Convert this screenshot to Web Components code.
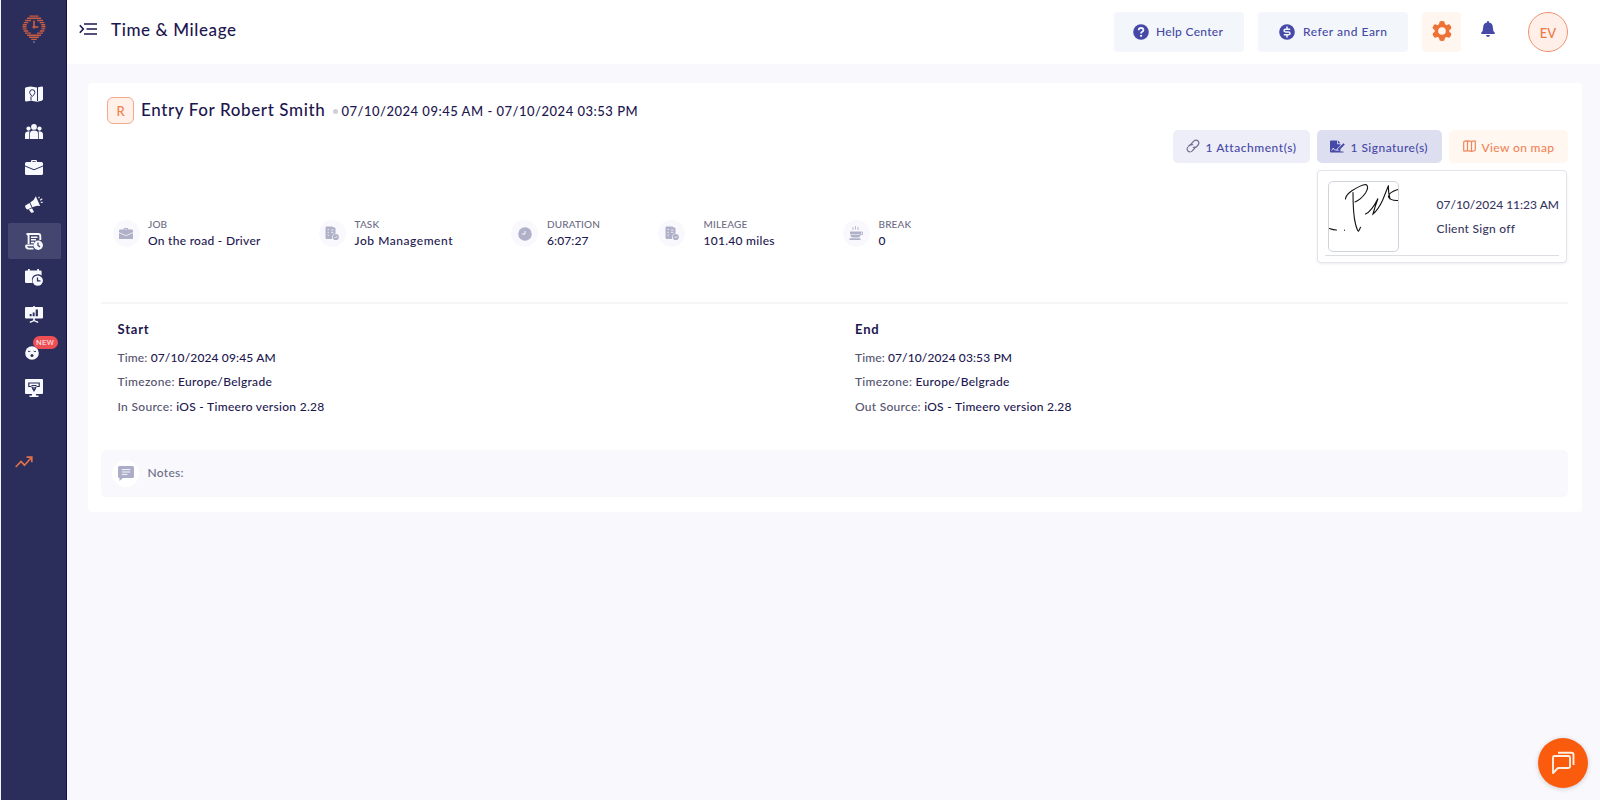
<!DOCTYPE html>
<html lang="en">
<head>
<meta charset="utf-8">
<title>Time &amp; Mileage</title>
<style>
    html, body {
        margin: 0;
        height: 100%;
        overflow: hidden;
    }

    body {
        font-family: Lato, "Open Sans", sans-serif;
        font-weight: 500;
        font-size: 12px;
        line-height: 16px;
        letter-spacing: 0.3px;
        color: #1d1750;
        background: #f8f8fd;
        --indigo: #4649a6;
        --orange: #ee7136;
        --muted: #6c6c84;
    }
</style>
</head>
<body>
<app-shell>
    <side-bar slot="side"></side-bar>
    <top-bar slot="top" heading="Time &amp; Mileage"></top-bar>
    <entry-card initial="R" heading="Entry For Robert Smith" range="07/10/2024 09:45 AM - 07/10/2024 03:53 PM">
        <action-chip slot="actions" icon="link" kind="plain" style="width:137px;--ls:.53px">1 Attachment(s)</action-chip>
        <action-chip slot="actions" icon="sign" kind="active" style="width:125px;--ls:.46px">1 Signature(s)</action-chip>
        <action-chip slot="actions" icon="map" kind="warm" style="width:119px;--ls:.36px">View on map</action-chip>
        <signature-popup slot="popup" date="07/10/2024 11:23 AM" note="Client Sign off"></signature-popup>

        <stat-item slot="stats" icon="case" label="JOB" style="width:206px;--gap:8.5px">On the road - Driver</stat-item>
        <stat-item slot="stats" icon="task" label="TASK" style="width:192.5px;--ls:.54px">Job Management</stat-item>
        <stat-item slot="stats" icon="clock" label="DURATION" style="width:147px;--ls:.1px">6:07:27</stat-item>
        <stat-item slot="stats" icon="task" label="MILEAGE" style="width:184.5px;--gap:18.5px">101.40 miles</stat-item>
        <stat-item slot="stats" icon="cup" label="BREAK">0</stat-item>

        <time-block slot="blocks" heading="Start">
            <info-row label="Time:" style="--ls:.14px">07/10/2024 09:45 AM</info-row>
            <info-row label="Timezone:">Europe/Belgrade</info-row>
            <info-row label="In Source:">iOS - Timeero version 2.28</info-row>
        </time-block>
        <time-block slot="blocks" heading="End">
            <info-row label="Time:" style="--ls:.11px">07/10/2024 03:53 PM</info-row>
            <info-row label="Timezone:">Europe/Belgrade</info-row>
            <info-row label="Out Source:" style="--ls:.27px">iOS - Timeero version 2.28</info-row>
        </time-block>

        <notes-bar slot="notes">Notes:</notes-bar>
    </entry-card>
    <chat-button slot="chat"></chat-button>
</app-shell>

<script>
    // [viewBox, markup]; shapes use currentColor, cut-outs use --cut
    const ICONS = {
        logo: ['0 0 24 28', `
            <g stroke="currentColor" stroke-width="1.4" fill="none">
                <path d="M7.5 1.1h9M5 3.3h14M3 5.5h6M15 5.5h6M1.7 7.6h4.6M17.7 7.6h4.6M.8 9.7h4M19.2 9.7h4M.5 11.8h4M19.5 11.8h4M.8 13.9h4M19.2 13.9h4M1.7 16h4.6M17.7 16h4.6M3 18.1h6M15 18.1h6M5 20.2h14M7 22.3h10M9.2 24.4h5.6"/>
                <path d="M12 5.5v6.500h4.500" stroke-width="1.7"/>
            </g>
            <circle cx="12" cy="12" r="1.6" fill="currentColor"/><circle cx="12" cy="27" r=".7" fill="#b9b4d6"/>`],
        pinmap: ['0 0 18 16', `
            <path fill="currentColor" d="M1.2 1.2 5.500.5 12 1.6 16.8.5q1.2 0 1.2 1v12l-1.2 1.200-4.600 1-6-1-5 .8Q0 15.500 0 14.300V2.400q0-1 1.200-1.200z"/>
            <path fill="none" stroke="var(--cut)" d="M12.500 1v14M4.700 6.300a2.600 2.600 0 1 1 5.200 0c0 1.800-2.600 4.200-2.600 4.200S4.700 8.100 4.700 6.300zM6 10.500v4"/>`],
        people: ['0 0 18 15', `
            <g fill="currentColor"><circle cx="9" cy="2.9" r="2.9"/><circle cx="3.5" cy="4.6" r="2.1"/><circle cx="14.5" cy="4.6" r="2.1"/>
            <path d="M4.9 15v-5.200q0-3.400 4.100-3.400t4.100 3.400V15zM0 15v-4.500q0-3.200 4.600-3.200Q4.200 8.500 4.200 10v5zM18 15v-4.500q0-3.200-4.600-3.200.4 1.200.4 2.700v5z"/></g>`],
        case: ['0 0 18 15', `
            <path fill="currentColor" d="M6 2V1.200Q6 0 7.200 0h3.600Q12 0 12 1.200V2h4.500Q18 2 18 3.500v1.900L9 9.200 0 5.400V3.500Q0 2 1.500 2zM7.300 2h3.400v-.8H7.300zM0 6.500l9 3.700 9-3.700v7q0 1.500-1.500 1.500h-15Q0 15 0 13.500z"/>`],
        horn: ['0 0 18 17', `
            <path fill="currentColor" d="M.3 9.4 4.500 7l2.200 4.600-4 1.800Q1.500 13.600.7 12T.3 9.400zM5.200 6.600Q9.600 4 10.800.3L15.200 10Q11.600 9 7.500 11.300zM3.800 13.600l3.200-1.400 2 3.800q-1 1-2.800.8z"/>
            <path stroke="currentColor" stroke-width="1.100" d="M13.700 2.200l.6-1.400M15 4.200l2.300-1.400M15.800 6.400h1.800"/>`],
        sheet: ['0 0 18 17', `
            <path fill="none" stroke="currentColor" stroke-width="1.900" d="M3.600 11V3.200Q3.400 1 1.500 1h11.800q2 0 2 2.200V7M.800 12.400h7.600M1 12.200q0 3.400 2.500 3.400h5"/>
            <path stroke="currentColor" stroke-width="1.500" d="M6 4.200h6.500M6 6.800h5M6 9.400h3"/>
            <circle cx="13.200" cy="12.200" r="4.700" fill="currentColor"/>
            <path fill="none" stroke="var(--cut)" stroke-width="1.300" d="M13 9.600v2.900l2 1.400"/>`],
        calendar: ['0 0 18 17', `
            <path fill="currentColor" d="M3 0h1.800v1.400h7.400V0H14v1.400h1.400q1.200 0 1.200 1.200v4Q14 4.600 10.300 5.700 6.200 7.300 7 12.200q.2 1 .8 1.800H1.200Q0 14 0 12.800V2.600q0-1.200 1.200-1.200H3z"/>
            <circle cx="12.700" cy="11.600" r="5.200" fill="currentColor"/>
            <path fill="none" stroke="var(--cut)" stroke-width="1.300" d="M12.500 8.600v3.300h3"/>`],
        board: ['0 0 18 17', `
            <path fill="currentColor" d="M8.200 0h1.600v1H17q1 0 1 1v9.500q0 1-1 1H9.800v1.700l3.700 1.600-.6 1.200L9 15.300 5.100 17l-.6-1.200 3.700-1.600v-1.700H1q-1 0-1-1V2q0-1 1-1h7.200z"/>
            <path fill="var(--cut)" d="M4.700 8h1.900v2.300H4.700zM7.700 6.500h1.900v3.800H7.700zM10.700 3.500h2.200v6.800h-2.200z"/>`],
        face: ['0 0 14 14', `
            <circle cx="7" cy="7" r="6.800" fill="currentColor"/><circle cx="7" cy="9.500" r="1.500" fill="var(--cut)"/>
            <path fill="none" stroke="var(--cut)" d="M3 5.200q1.200.9 2.400 0M8.600 5.200q1.200.9 2.400 0"/>`],
        monitor: ['0 0 18 18', `
            <path fill="currentColor" d="M1 0h16q1 0 1 1v13q0 1-1 1h-6v1.500h2.500V18h-9v-1.500H7V15H1q-1 0-1-1V1q0-1 1-1z"/>
            <path fill="none" stroke="var(--cut)" stroke-width="1.200" d="M6.200 7.500H3.800V4h10.400v3.500h-2.400M6.500 6.500h5M6.700 7.500 9 11.800l2.300-4.300"/><circle cx="9" cy="9.800" r="1.200" fill="none" stroke="var(--cut)"/>`],
        trend: ['0 0 18 12', `
            <path fill="none" stroke="currentColor" stroke-width="1.700" d="M.7 11 6 5.500l3.500 3.700L16 2M11.500 1.200h5.300v5"/>`],
        menu: ['0 0 18 12', `
            <path fill="none" stroke="currentColor" stroke-width="1.600" d="M.8 2.300 4.300 6 .8 9.700M5 1h13M7.500 6H18M5 11h13"/>`],
        help: ['0 0 16 16', `
            <circle cx="8" cy="8" r="7.800" fill="currentColor"/>
            <path fill="none" stroke="var(--cut)" stroke-width="1.800" d="M5.700 6.200q.1-2.200 2.400-2.200t2.300 2q0 1.100-1.200 1.700T8.100 9.500"/><circle cx="8.100" cy="11.800" r="1.100" fill="var(--cut)"/>`],
        dollar: ['0 0 16 16', `
            <circle cx="8" cy="8" r="7.800" fill="currentColor"/>
            <path fill="none" stroke="var(--cut)" stroke-width="1.500" d="M11.200 5.200H6.700Q5 5.200 5 6.600T6.700 8h2.700Q11 8 11 9.400t-1.600 1.400H4.800M8 2.500v2.700M8 10.800v2.700"/>`],
        gear: ['0 0 20 20', `
            <g fill="currentColor">
                <circle cx="10" cy="10" r="7.400"/>
                <rect x="7.200" width="5.600" height="20" rx="2.200"/>
                <rect x="7.200" width="5.600" height="20" rx="2.200" transform="rotate(60 10 10)"/>
                <rect x="7.200" width="5.600" height="20" rx="2.200" transform="rotate(120 10 10)"/>
            </g>
            <circle cx="10" cy="10" r="3.800" fill="var(--cut)"/>`],
        bell: ['0 0 14 16', `
            <path fill="currentColor" d="M6 1q0-1 1-1t1 1v.5q3.800.7 3.800 4.700 0 3.800 1.900 5.400.6 1.400-.7 1.400H1Q-.3 13 .3 11.600q1.900-1.600 1.900-5.400 0-4 3.800-4.700zM5 14h4q-.3 2-2 2t-2-2z"/>`],
        link: ['0 0 14 14', `
            <g fill="none" stroke="currentColor" stroke-width="1.200" stroke-linecap="round">
                <path d="M5 6.200Q5 4.900 6 4l2-2.100q2-1.600 4 .1 1.700 2 .1 4L10.500 7.700Q9 9 7.300 8.300"/>
                <path d="M9 7.800Q9 9.100 8 10l-2 2.100q-2 1.600-4-.1-1.700-2-.1-4l1.600-1.700Q5 5 6.700 5.700" stroke-dasharray="6 1.500"/>
            </g>`],
        sign: ['0 0 15 13', `
            <path fill="currentColor" d="M1 .5h6.200v3.700h3.300v1L6.700 9v2h2l1.800-1.800v2.300q0 1-1 1H1q-1 0-1-1v-10q0-1 1-1zM8 .5l2.500 2.800H8zM13.400 3.200l1.400 1.300-5.500 5.700-1.900.5.500-1.900z"/>
            <path fill="none" stroke="var(--cut)" stroke-width=".9" d="M1.700 10.500 3.200 8l1.300 2H7"/>
            <path stroke="currentColor" d="M10 12h3.500"/>`],
        map: ['0 0 13 12', `
            <path fill="none" stroke="currentColor" stroke-width="1.200" d="M1.600 1.200 4.500.8l4 .5 3-.5q.8 0 .8.800v8.500l-.8.700-3 .5-4-.7-3 .6q-.8 0-.8-.8V2zM4.500.8v10M8.500 1.300v10"/>`],
        task: ['0 0 14 15', `
            <path fill="currentColor" d="M1.700.5H7l3.500 1.500v5.600q-3.500.5-3.500 4.300 0 .6.200 1.100H1.700q-1.200 0-1.200-1.200V1.700q0-1.200 1.200-1.200z"/>
            <path stroke="var(--cut)" stroke-width=".8" d="M2.500 3.500h1.500M2.500 6.300h1.500M2.500 9.100h1.500M6 4h2.500M6 6.300h2.500"/>
            <circle cx="10.800" cy="11" r="3.100" fill="currentColor"/><path fill="none" stroke="var(--cut)" stroke-width=".8" d="m9.500 11 1 1 1.800-2"/>`],
        clock: ['0 0 14 14', `
            <circle cx="7" cy="7" r="6.800" fill="currentColor"/><path fill="none" stroke="var(--cut)" d="M7 4v3H3.800"/>`],
        cup: ['0 0 14 15', `
            <path fill="currentColor" d="M1 5.500h11V7q-.3 4-2.500 4.500h-6Q1.200 11 1 7zM.5 12.300h11V14H.5z"/>
            <path fill="none" stroke="currentColor" stroke-width=".9" d="M12 6h1.500v2.500H11M4 1v3M6.500 0v3.500M9 1v3"/>
            <path stroke="var(--cut)" stroke-width=".6" d="M1 8.500h10"/>`],
        note: ['0 0 16 15', `
            <path fill="currentColor" d="M1.500 0h13Q16 0 16 1.500v9q0 1.500-1.500 1.500H5l-3.500 3V12Q0 12 0 10.500v-9Q0 0 1.500 0z"/>
            <path stroke="var(--cut)" stroke-width=".9" d="M3.800 3.600h8.400M3.800 6h8.400M3.800 8.400h5.500"/>`],
        chat: ['0 0 24 24', `
            <g fill="none" stroke="currentColor" stroke-width="1.900" stroke-linejoin="round">
                <path d="M2 6.500Q2 5 3.500 5h14Q19 5 19 6.500v9q0 1.500-1.500 1.500H7l-5 5zM7 1.800h13.500q2 0 2 2V14"/>
            </g>`],
    };

    class UiIcon extends HTMLElement {
        connectedCallback() {
            const [box, body] = ICONS[this.getAttribute('name')];
            const [, , w, h] = box.split(' ');
            const size = this.getAttribute('w') || w;
            this.attachShadow({mode: 'open'});
            this.shadowRoot.innerHTML = `
                <style>
                    :host { display: inline-flex; flex: none; }
                    svg { display: block; }
                </style>
                <svg viewBox="${box}" width="${size}" height="${size * h / w}">${body}</svg>
            `;
        }
    }

    class AppShell extends HTMLElement {
        connectedCallback() {
            this.attachShadow({mode: 'open'});
            this.shadowRoot.innerHTML = `
                <style>
                    :host { display: flex; height: 800px; }
                    .main { flex: 1; min-width: 0; display: flex; flex-direction: column; }
                    .content { padding: 19px 18.5px 0 21px; }
                    .chat { position: fixed; right: 12px; bottom: 12.5px; }
                </style>
                <slot name="side"></slot>
                <div class="main">
                    <slot name="top"></slot>
                    <div class="content"><slot></slot></div>
                </div>
                <div class="chat"><slot name="chat"></slot></div>
            `;
        }
    }

    class SideBar extends HTMLElement {
        connectedCallback() {
            const names = ['pinmap', 'people', 'case', 'horn', 'sheet', 'calendar', 'board', 'face', 'monitor'];
            this.attachShadow({mode: 'open'});
            this.shadowRoot.innerHTML = `
                <style>
                    :host {
                        --cut: #2b2d5b;
                        box-sizing: border-box;
                        width: 67px;
                        flex: none;
                        display: flex;
                        flex-direction: column;
                        background: #2b2d5b;
                        border-left: 1px solid #f3f3fa;
                        border-right: 1px solid #11104f;
                        color: #f8f9ff;
                    }
                    .logo { height: 61px; padding: 15px 0 0 21px; box-sizing: border-box; color: #c75d43; }
                    nav { display: flex; flex-direction: column; padding: 15px 5px 0 6.5px; }
                    .item {
                        height: 36.7px;
                        display: flex;
                        align-items: center;
                        justify-content: center;
                        position: relative;
                    }
                    .active { background: #44466f; --cut: #44466f; border-radius: 2px; }
                    .item.face { box-sizing: border-box; justify-content: flex-start; padding: 4px 0 0 17px; }
                    .new {
                        position: absolute;
                        left: 25px;
                        top: 3px;
                        width: 25px;
                        height: 13px;
                        border-radius: 7px;
                        background: #ee4f55;
                        color: #ffe9e9;
                        font: 400 8px/13px Roboto, sans-serif;
                        letter-spacing: 0.2px;
                        text-align: center;
                    }
                    .trend { padding: 50px 0 0 14px; color: #e0714a; }
                </style>
                <div class="logo"><ui-icon name="logo"></ui-icon></div>
                <nav>
                    ${names.map(n => `
                        <div class="item ${n} ${n === 'sheet' ? 'active' : ''}">
                            <ui-icon name="${n}"></ui-icon>${n === 'face' ? '<span class="new">NEW</span>' : ''}
                        </div>`).join('')}
                </nav>
                <div class="trend"><ui-icon name="trend"></ui-icon></div>
            `;
        }
    }

    class TopBar extends HTMLElement {
        connectedCallback() {
            this.attachShadow({mode: 'open'});
            this.shadowRoot.innerHTML = `
                <style>
                    :host {
                        box-sizing: border-box;
                        height: 64px;
                        display: flex;
                        align-items: flex-start;
                        padding: 12px 32px 0 12px;
                        background: #fff;
                    }
                    .menu { padding-top: 10.5px; }
                    h1 { margin: 8px auto 0 14px; font-size: 17px; line-height: 20px; font-weight: 500; letter-spacing: 0.61px; }
                    .btn {
                        box-sizing: border-box;
                        height: 39.5px;
                        display: flex;
                        align-items: center;
                        border-radius: 4px;
                        background: #f3f7fb;
                        --cut: #f3f7fb;
                        color: var(--indigo);
                    }
                    .help { width: 130px; padding-left: 19.5px; gap: 7px; }
                    .refer { width: 150px; padding-left: 21.5px; gap: 8px; margin-left: 14px; letter-spacing: 0.5px; }
                    .gear { width: 39px; justify-content: center; margin-left: 14.5px; background: #fff7ef; --cut: #fff7ef; color: var(--orange); }
                    .gear ui-icon { margin-top: -1px; }
                    .bell { margin: 9px 0 0 20px; color: var(--indigo); }
                    .avatar {
                        box-sizing: border-box;
                        width: 40px;
                        height: 40px;
                        margin-left: 33px;
                        border: 1px solid #f0946f;
                        border-radius: 50%;
                        background: #ffefe8;
                        color: #ec7a46;
                        font: 500 13px/40px Lato, sans-serif;
                        letter-spacing: 0;
                        text-align: center;
                    }
                </style>
                <div class="menu"><ui-icon name="menu"></ui-icon></div>
                <h1></h1>
                <div class="btn help"><ui-icon name="help"></ui-icon><span>Help Center</span></div>
                <div class="btn refer"><ui-icon name="dollar"></ui-icon><span>Refer and Earn</span></div>
                <div class="btn gear"><ui-icon name="gear"></ui-icon></div>
                <div class="bell"><ui-icon name="bell"></ui-icon></div>
                <div class="avatar">EV</div>
            `;
            this.shadowRoot.querySelector('h1').textContent = this.getAttribute('heading');
        }
    }

    class EntryCard extends HTMLElement {
        connectedCallback() {
            this.attachShadow({mode: 'open'});
            this.shadowRoot.innerHTML = `
                <style>
                    :host {
                        display: block;
                        box-sizing: border-box;
                        height: 429px;
                        padding: 14px 14px 0 13px;
                        background: #fff;
                        border-radius: 4px;
                    }
                    .title { display: flex; padding-left: 6px; height: 33px; }
                    .initial {
                        box-sizing: border-box;
                        width: 27px;
                        height: 27px;
                        border: 1px solid #f3a98b;
                        border-radius: 6px;
                        background: #fff0ea;
                        color: #ee8048;
                        font-size: 13px;
                        line-height: 27px;
                        letter-spacing: 0;
                        text-align: center;
                    }
                    h2 { margin: 3px 0 0 7px; font-size: 17px; line-height: 20px; font-weight: 500; letter-spacing: 0.62px; }
                    .dot { width: 5px; height: 5px; border-radius: 50%; background: #cfcfd8; margin: 11.5px 3.5px 0 7.5px; }
                    .range { margin-top: 5px; font-size: 13px; line-height: 19px; letter-spacing: 0.5px; }
                    .actions { display: flex; justify-content: flex-end; gap: 7px; position: relative; }
                    .popup { position: absolute; right: 0.5px; top: 40px; }
                    .stats { display: flex; padding: 56px 0 0 11.5px; height: 83px; }
                    .blocks { display: grid; grid-template-columns: 737.5px 1fr; padding-left: 16.5px; height: 146px; border-top: 2px solid #f6f6f9; }
                </style>
                <div class="title">
                    <div class="initial"></div>
                    <h2></h2>
                    <div class="dot"></div>
                    <div class="range"></div>
                </div>
                <div class="actions">
                    <slot name="actions"></slot>
                    <div class="popup"><slot name="popup"></slot></div>
                </div>
                <div class="stats"><slot name="stats"></slot></div>
                <div class="blocks"><slot name="blocks"></slot></div>
                <slot name="notes"></slot>
            `;
            this.shadowRoot.querySelector('.initial').textContent = this.getAttribute('initial');
            this.shadowRoot.querySelector('h2').textContent = this.getAttribute('heading');
            this.shadowRoot.querySelector('.range').textContent = this.getAttribute('range');
        }
    }

    class ActionChip extends HTMLElement {
        connectedCallback() {
            this.attachShadow({mode: 'open'});
            this.shadowRoot.innerHTML = `
                <style>
                    :host {
                        box-sizing: border-box;
                        height: 33px;
                        display: flex;
                        align-items: center;
                        gap: 6px;
                        padding: 2px 0 0 13px;
                        border-radius: 5px;
                        color: var(--indigo);
                        background: #eeeef8;
                        letter-spacing: var(--ls);
                        white-space: nowrap;
                    }
                    ui-icon { margin-top: -3px; }
                    :host([kind=plain]) ui-icon { color: #6f6f92; }
                    :host([kind=active]) { background: #dddef0; --cut: #dddef0; }
                    :host([kind=warm]) { background: #fff7f0; color: #f0855a; padding-left: 14px; }
                </style>
                <ui-icon name="${this.getAttribute('icon')}"></ui-icon>
                <span><slot></slot></span>
            `;
        }
    }

    class SignaturePopup extends HTMLElement {
        connectedCallback() {
            this.attachShadow({mode: 'open'});
            this.shadowRoot.innerHTML = `
                <style>
                    :host {
                        display: block;
                        box-sizing: border-box;
                        width: 250px;
                        height: 93px;
                        padding: 10px 7px 0;
                        background: #fff;
                        border: 1px solid #e3e4ec;
                        border-radius: 4px;
                        box-shadow: 0 1px 3px rgba(40, 40, 90, 0.08);
                        color: #39375f;
                    }
                    .row { display: flex; padding-left: 3px; height: 74px; border-bottom: 1px solid #dcdee4; }
                    .thumb { box-sizing: border-box; width: 71px; height: 71px; border: 1px solid #cfd3dc; border-radius: 5px; flex: none; }
                    svg { display: block; }
                    .text { padding: 16px 0 0 37.5px; white-space: nowrap; letter-spacing: 0; }
                    .text div { height: 24.3px; }
                    .note { letter-spacing: 0.27px; }
                </style>
                <div class="row">
                    <div class="thumb">
                        <svg width="69" height="69" viewBox="0 0 69 69" fill="none" stroke="#111" stroke-width="1.1" stroke-linecap="round">
                            <path d="M16.5 17q0-3.500 6-8 9-6 14.500-6.500 3.500 2-.5 8.500-4.500 6.500-10.500 9M24 10.500q0 22 2.500 31.500 2 7.500 3 7.200 1-1 2-4"/>
                            <path d="M36.500 32q6-2.500 12.500-15.500-3 8-5 15.500 5-4 9.500-13.500L59.500 3.500q-.5 6 1.500 13.500M69 7.500q-10 3-9.500 7.500 2.500 4 9.500 3.500M.5 46.500q3.500 1.500 7 1.500M15.500 48v.3"/>
                        </svg>
                    </div>
                    <div class="text">
                        <div class="date"></div>
                        <div class="note"></div>
                    </div>
                </div>
            `;
            this.shadowRoot.querySelector('.date').textContent = this.getAttribute('date');
            this.shadowRoot.querySelector('.note').textContent = this.getAttribute('note');
        }
    }

    class StatItem extends HTMLElement {
        connectedCallback() {
            this.attachShadow({mode: 'open'});
            this.shadowRoot.innerHTML = `
                <style>
                    :host { display: flex; gap: var(--gap, 9px); flex: none; }
                    .round {
                        width: 27px;
                        height: 27px;
                        margin-top: 1px;
                        border-radius: 50%;
                        display: flex;
                        align-items: center;
                        justify-content: center;
                        background: #f9f9fd;
                        --cut: #f9f9fd;
                        color: #b0b1c8;
                    }
                    .label { margin-top: -1px; padding-bottom: 2px; font-size: 10px; line-height: 13px; letter-spacing: 0.15px; color: var(--muted); }
                    .value { letter-spacing: var(--ls, 0.28px); white-space: nowrap; }
                </style>
                <div class="round"><ui-icon name="${this.getAttribute('icon')}" w="14"></ui-icon></div>
                <div>
                    <div class="label">${this.getAttribute('label')}</div>
                    <div class="value"><slot></slot></div>
                </div>
            `;
        }
    }

    class TimeBlock extends HTMLElement {
        connectedCallback() {
            this.attachShadow({mode: 'open'});
            this.shadowRoot.innerHTML = `
                <style>
                    :host { display: block; padding-top: 17px; }
                    h3 { margin: 0 0 9px; font-size: 13px; line-height: 16px; font-weight: 700; letter-spacing: 0.8px; }
                </style>
                <h3>${this.getAttribute('heading')}</h3>
                <slot></slot>
            `;
        }
    }

    class InfoRow extends HTMLElement {
        connectedCallback() {
            this.attachShadow({mode: 'open'});
            this.shadowRoot.innerHTML = `
                <style>
                    :host { display: block; line-height: 24.3px; letter-spacing: var(--ls, 0.3px); }
                    span { color: #55546f; }
                </style>
                <span>${this.getAttribute('label')}</span> <slot></slot>
            `;
        }
    }

    class NotesBar extends HTMLElement {
        connectedCallback() {
            this.attachShadow({mode: 'open'});
            this.shadowRoot.innerHTML = `
                <style>
                    :host {
                        display: flex;
                        align-items: center;
                        box-sizing: border-box;
                        height: 47px;
                        padding: 0 0 1px 11px;
                        gap: 8.5px;
                        background: #f8f8fd;
                        border-radius: 5px;
                        color: var(--muted);
                    }
                    .round {
                        width: 27px;
                        height: 27px;
                        border-radius: 50%;
                        display: flex;
                        align-items: center;
                        justify-content: center;
                        background: #fff;
                        --cut: #fff;
                        color: #acaec9;
                    }
                </style>
                <div class="round"><ui-icon name="note"></ui-icon></div>
                <span><slot></slot></span>
            `;
        }
    }

    class ChatButton extends HTMLElement {
        connectedCallback() {
            this.attachShadow({mode: 'open'});
            this.shadowRoot.innerHTML = `
                <style>
                    :host {
                        width: 50px;
                        height: 50px;
                        display: flex;
                        align-items: center;
                        justify-content: center;
                        border-radius: 50%;
                        background: #fa5b0c;
                        color: #ffeee2;
                        box-shadow: 0 1px 5px rgba(0, 0, 0, 0.18);
                    }
                </style>
                <ui-icon name="chat"></ui-icon>
            `;
        }
    }

    customElements.define('ui-icon', UiIcon);
    customElements.define('app-shell', AppShell);
    customElements.define('side-bar', SideBar);
    customElements.define('top-bar', TopBar);
    customElements.define('entry-card', EntryCard);
    customElements.define('action-chip', ActionChip);
    customElements.define('signature-popup', SignaturePopup);
    customElements.define('stat-item', StatItem);
    customElements.define('time-block', TimeBlock);
    customElements.define('info-row', InfoRow);
    customElements.define('notes-bar', NotesBar);
    customElements.define('chat-button', ChatButton);
</script>
</body>
</html>
